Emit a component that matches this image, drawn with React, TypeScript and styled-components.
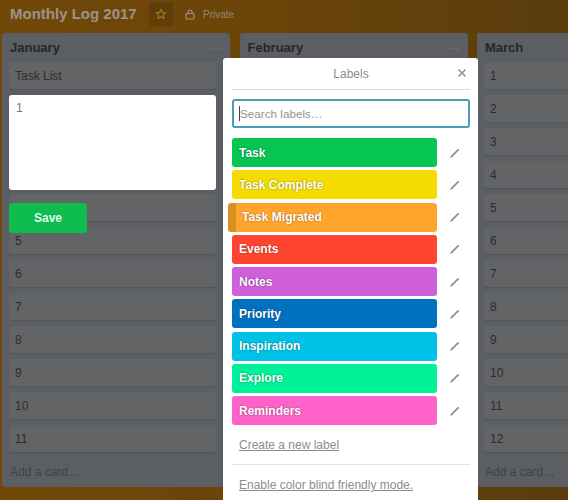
import React from "react";
import styled, { createGlobalStyle } from "styled-components";

const Global = createGlobalStyle`
  html, body { margin: 0; padding: 0; background: #65430b; }
  body { font-family: "Liberation Sans", Arial, sans-serif; overflow: hidden; }
`;

const Page = styled.div`
  position: relative;
  width: 568px;
  height: 500px;
  overflow: hidden;
  background: linear-gradient(90deg, #704808 0%, #6b4509 45%, #5a3c0d 100%);
`;

const Header = styled.header`
  display: flex;
  align-items: center;
  height: 33px;
  padding: 0 0 5px 10px;
  box-sizing: border-box;
`;

const BoardTitle = styled.h1`
  margin: 0;
  width: 139px;
  font-size: 15px;
  line-height: 28px;
  font-weight: 700;
  white-space: nowrap;
  color: #9b948a;
`;

const StarBox = styled.div`
  display: flex;
  align-items: center;
  justify-content: center;
  width: 24px;
  height: 24px;
  border-radius: 3px;
  background: #5f3e09;
  margin-right: 12px;
`;

const Privacy = styled.div`
  display: flex;
  align-items: center;
  gap: 8px;
  font-size: 10px;
  color: #8e887a;
`;

const Board = styled.main`
  display: flex;
  align-items: stretch;
  gap: 9.5px;
  padding-left: 2px;
  height: 454px;
`;

const List = styled.section`
  flex: 0 0 228px;
  display: flex;
  flex-direction: column;
  box-sizing: border-box;
  padding: 0 14px 0 7px;
  background: #5b5e62;
  border-radius: 3px;
`;

const ListHead = styled.div`
  display: flex;
  align-items: center;
  justify-content: space-between;
  height: 29px;
  flex: none;
  padding-left: 1px;
  font-size: 13px;
  font-weight: 700;
  color: #25272c;
`;

const Dots = styled.span`
  font-size: 12px;
  font-weight: 400;
  color: #7d8084;
  transform: translateX(6px);
`;

const Cards = styled.div`
  display: flex;
  flex-direction: column;
  gap: 6px;
  flex: none;
`;

const Card = styled.div`
  height: 27px;
  box-sizing: border-box;
  padding: 0 6px;
  display: flex;
  align-items: center;
  font-size: 12px;
  color: #2c2d2e;
  background: #636466;
  border-radius: 3px;
  box-shadow: 0 1px 0 #525458;
`;

const AddCard = styled.div`
  margin-top: 12px;
  padding-left: 1px;
  font-size: 12px;
  line-height: 16px;
  color: #414346;
`;

const QuickEditor = styled.div`
  position: absolute;
  left: 9px;
  top: 95px;
  width: 207px;
  display: flex;
  flex-direction: column;
  align-items: flex-start;
  gap: 13px;
`;

const EditorArea = styled.div`
  width: 100%;
  height: 95px;
  box-sizing: border-box;
  padding: 6px 7px;
  background: #fff;
  border-radius: 3px;
  font-size: 12px;
  line-height: 15px;
  color: #777;
`;

const SaveButton = styled.button`
  width: 78px;
  height: 30px;
  padding: 0;
  border: 0;
  border-radius: 3px;
  background: #0dbd50;
  color: #e6f7ec;
  font: 700 12px "Liberation Sans", Arial, sans-serif;
`;

const Popover = styled.aside`
  position: absolute;
  left: 223px;
  top: 58px;
  width: 255px;
  height: 442px;
  box-sizing: border-box;
  padding: 0 8px 0 9px;
  background: #fff;
  border-radius: 3px 3px 0 0;
`;

const PopHead = styled.div`
  position: relative;
  display: flex;
  align-items: center;
  justify-content: center;
  height: 31px;
  font-size: 12px;
  color: #8a8d91;
  border-bottom: 1px solid #dcdcdc;
`;

const Close = styled.span`
  position: absolute;
  right: 3px;
  top: 10px;
  width: 10px;
  height: 10px;
  display: flex;
`;

const SearchBox = styled.div`
  display: flex;
  align-items: center;
  height: 29px;
  margin-top: 9px;
  box-sizing: border-box;
  padding-left: 5px;
  border: 2px solid #4d9cb4;
  border-radius: 3px;
  font-size: 11.7px;
  color: #949494;
`;

const Caret = styled.span`
  width: 1px;
  height: 15px;
  background: #444;
`;

const Labels = styled.ul`
  display: flex;
  flex-direction: column;
  gap: 3.25px;
  list-style: none;
  margin: 10px 0 0;
  padding: 0;
`;

const LabelRow = styled.li`
  display: flex;
  align-items: center;
  height: 29px;
`;

const Label = styled.div<{ $color: string; $active?: boolean }>`
  display: flex;
  align-items: center;
  box-sizing: border-box;
  width: ${(p) => (p.$active ? "209px" : "205px")};
  height: 29px;
  margin-left: ${(p) => (p.$active ? "-4px" : "0")};
  padding-left: ${(p) => (p.$active ? "6px" : "7px")};
  background: ${(p) => p.$color};
  border-left: ${(p) => (p.$active ? "8px solid #d9901f" : "0")};
  border-radius: 3px;
  font-size: 12px;
  font-weight: 700;
  color: #fff;
  text-shadow: 0 0 2px rgba(0, 0, 0, 0.45);
`;

const PencilSlot = styled.span`
  display: flex;
  margin-left: 12px;
`;

const TextLink = styled.a`
  display: block;
  margin: 0 0 0 7px;
  font-size: 12px;
  line-height: 16px;
  color: #8b8d90;
  text-decoration: underline;
`;

const CreateLink = styled(TextLink)`
  margin-top: 12px;
`;

const Rule = styled.hr`
  margin: 11px 0 12px;
  border: 0;
  border-top: 1px solid #e4e4e4;
`;

const Pencil = () => (
  <svg width="12" height="12" viewBox="0 0 12 12">
    <path d="M1.2 10.800 L1.700 9 L9 1.700 L10.300 3 L3 10.300 Z" fill="#8f8f8f" />
  </svg>
);

const labels = [
  ["Task", "#06c552"],
  ["Task Complete", "#f4dc00"],
  ["Task Migrated", "#ffa52e"],
  ["Events", "#ff4530"],
  ["Notes", "#d05fdc"],
  ["Priority", "#0071bf"],
  ["Inspiration", "#00c2e6"],
  ["Explore", "#00f299"],
  ["Reminders", "#ff62c8"],
];

const range = (n: number) => Array.from({ length: n }, (_, i) => String(i + 1));

export default function App() {
  return (
    <Page>
      <Global />
      <Header>
        <BoardTitle>Monthly Log 2017</BoardTitle>
        <StarBox>
          <svg width="12" height="12" viewBox="0 0 24 24" fill="none" stroke="#8f7c10" strokeWidth="2.600" strokeLinejoin="round">
            <path d="M12 2.500l2.900 6.200 6.600.8-4.900 4.600 1.300 6.600L12 17.400l-5.900 3.300 1.300-6.600L2.500 9.500l6.600-.8z" />
          </svg>
        </StarBox>
        <Privacy>
          <svg width="10" height="11" viewBox="0 0 10 11" fill="none" stroke="#9a9486" strokeWidth="1.200">
            <rect x="1" y="4.500" width="8" height="5.500" rx="1" />
            <path d="M3 4.500V3a2 2 0 0 1 4 0v1.500" />
          </svg>
          <span>Private</span>
        </Privacy>
      </Header>
      <Board>
        <List>
          <ListHead>January<Dots>···</Dots></ListHead>
          <Cards>
            {["Task List", ...range(11)].map((c) => (
              <Card key={c}>{c}</Card>
            ))}
          </Cards>
          <AddCard>Add a card…</AddCard>
        </List>
        <List>
          <ListHead>February<Dots>···</Dots></ListHead>
        </List>
        <List>
          <ListHead>March</ListHead>
          <Cards>
            {range(12).map((c) => (
              <Card key={c}>{c}</Card>
            ))}
          </Cards>
          <AddCard>Add a card…</AddCard>
        </List>
      </Board>
      <QuickEditor>
        <EditorArea>1</EditorArea>
        <SaveButton>Save</SaveButton>
      </QuickEditor>
      <Popover>
        <PopHead>
          Labels
          <Close>
            <svg width="10" height="10" viewBox="0 0 10 10" stroke="#8c8f92" strokeWidth="1.500">
              <path d="M1.500 1.500l7 7M8.500 1.500l-7 7" />
            </svg>
          </Close>
        </PopHead>
        <SearchBox>
          <Caret />
          Search labels…
        </SearchBox>
        <Labels>
          {labels.map(([name, color]) => (
            <LabelRow key={name}>
              <Label $color={color} $active={name === "Task Migrated"}>{name}</Label>
              <PencilSlot><Pencil /></PencilSlot>
            </LabelRow>
          ))}
        </Labels>
        <CreateLink>Create a new label</CreateLink>
        <Rule />
        <TextLink>Enable color blind friendly mode.</TextLink>
      </Popover>
    </Page>
  );
}
